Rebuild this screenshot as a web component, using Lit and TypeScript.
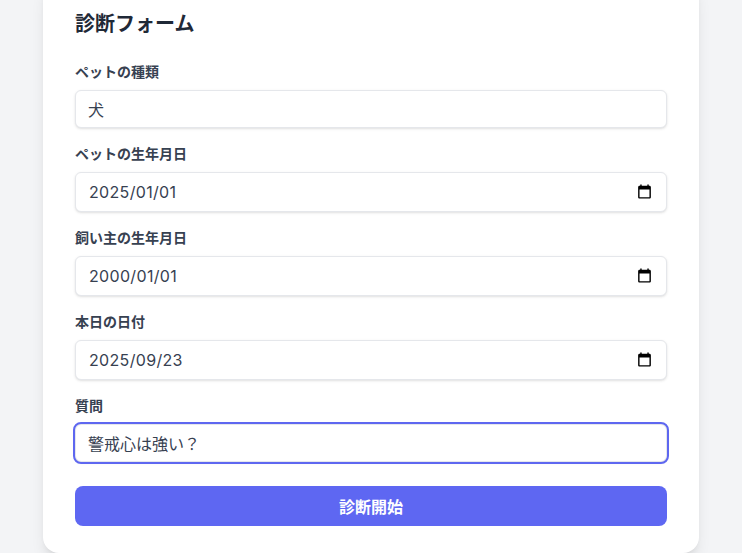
import { LitElement, html, css } from "lit";
import { customElement } from "lit/decorators.js";

@customElement("app-root")
export class AppRoot extends LitElement {
  static styles = css`
    :host {
      display: block;
      height: 553px;
      overflow: hidden;
      background: #f3f4f6;
      font-family: Inter, "Noto Sans CJK JP", sans-serif;
    }
    * { box-sizing: border-box; }
    .page {
      height: 553px;
      display: flex;
      flex-direction: column;
      justify-content: flex-end;
      align-items: center;
    }
    .card {
      flex: none;
      width: 656px;
      background: #fff;
      border-radius: 16px;
      padding: 32px 32px 27px;
      box-shadow: 0 10px 15px -3px rgba(0,0,0,.1), 0 4px 6px -4px rgba(0,0,0,.1);
    }
    h2 {
      margin: 0 0 24px;
      font-size: 20px;
      line-height: 28px;
      font-weight: 700;
      color: #1f2937;
    }
    .group { margin-bottom: 16px; }
    label {
      display: block;
      font-size: 14px;
      line-height: 20px;
      font-weight: 600;
      color: #374151;
      margin-bottom: 8px;
    }
    input {
      display: block;
      width: 100%;
      margin: 0;
      padding: 8px 12px;
      border: 1px solid #e5e7eb;
      border-radius: 6px;
      background: #fff;
      font: inherit;
      font-size: 16px;
      color: #374151;
      box-shadow: 0 1px 3px 0 rgba(0,0,0,.1), 0 1px 2px -1px rgba(0,0,0,.1);
    }
    input.ring {
      outline: 2px solid #5e67f0;
      outline-offset: 0;
    }
    .date { position: relative; }
    .date input { height: 40px; padding-left: 13px; letter-spacing: 0.33px; }
    .date svg {
      position: absolute;
      right: 14.5px;
      top: 11px;
      width: 17px;
      height: 17px;
      fill: #000;
    }
    button {
      display: block;
      width: 100%;
      height: 40px;
      margin-top: 24px;
      border: 0;
      border-radius: 8px;
      background: #5e67f2;
      color: #fff;
      font: inherit;
      font-size: 16px;
      font-weight: 700;
    }
    .last { margin-bottom: 0; }
  `;

  private dateField(value: string) {
    return html`
      <div class="date">
        <input type="text" .value=${value} />
        <svg viewBox="0 0 24 24" aria-hidden="true">
          <path d="M19 4h-1V2h-2v2H8V2H6v2H5c-1.1 0-2 .9-2 2v14c0 1.1.9 2 2 2h14c1.1 0 2-.9 2-2V6c0-1.1-.9-2-2-2zm0 16H5V9h14v11z" />
        </svg>
      </div>
    `;
  }

  render() {
    return html`
      <div class="page" lang="ja">
        <form class="card">
          <h2>診断フォーム</h2>
          <div class="group">
            <label>ペットの種類</label>
            <input type="text" value="犬" />
          </div>
          <div class="group">
            <label>ペットの生年月日</label>
            ${this.dateField("2025/01/01")}
          </div>
          <div class="group">
            <label>飼い主の生年月日</label>
            ${this.dateField("2000/01/01")}
          </div>
          <div class="group">
            <label>本日の日付</label>
            ${this.dateField("2025/09/23")}
          </div>
          <div class="group last">
            <label>質問</label>
            <input class="ring" type="text" value="警戒心は強い？" />
          </div>
          <button type="button">診断開始</button>
        </form>
      </div>
    `;
  }
}
